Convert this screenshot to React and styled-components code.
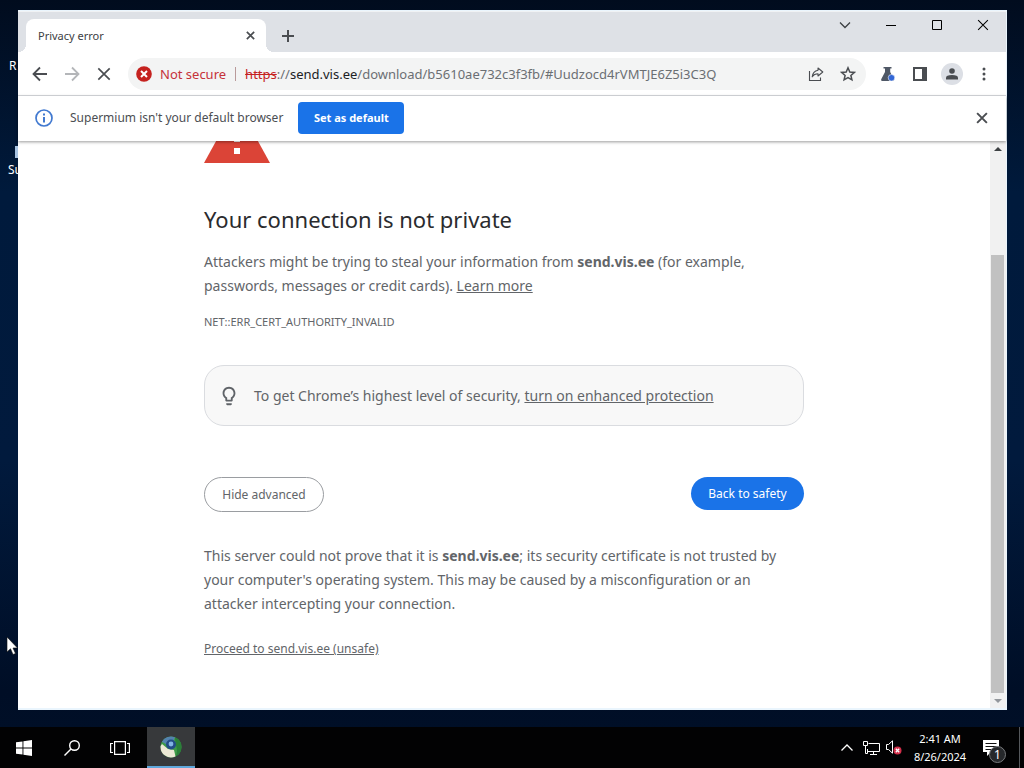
import styled, { createGlobalStyle } from "styled-components";

const GlobalStyle = createGlobalStyle`
    * {
        box-sizing: border-box;
    }
    body {
        margin: 0;
        font-family: "Noto Sans", "Open Sans", sans-serif;
        font-size: 14px;
        color: #626569;
    }
    button {
        font-family: inherit;
        padding: 0;
        border: none;
        background: none;
        cursor: pointer;
    }
    svg {
        display: block;
        flex-shrink: 0;
    }
`;

const Desktop = styled.div`
    position: relative;
    min-height: 100vh;
    display: flex;
    flex-direction: column;
    overflow: hidden;
    background: linear-gradient(180deg, #010c1e 0%, #001a3c 25%, #011a3d 60%, #000e26 90%, #001028 100%);
`;

const Shortcut = styled.span`
    position: absolute;
    left: ${(props) => props.$left}px;
    top: ${(props) => props.$top}px;
    font-size: 12px;
    line-height: 16px;
    color: white;
`;

const ShortcutIcon = styled.span`
    position: absolute;
    left: 15px;
    top: 146px;
    width: 32px;
    height: 12px;
    background-color: #a9c4e2;
`;

const Workspace = styled.div`
    position: relative;
    flex: 1;
    display: flex;
    padding: 10px 17px 17px 18px;
`;

const Window = styled.div`
    flex: 1;
    min-width: 0;
    display: flex;
    flex-direction: column;
    background-color: white;
    border: solid #eaf5fd;
    border-width: 1px 1px 2px 0;
`;

const TabStrip = styled.div`
    display: flex;
    align-items: flex-start;
    height: 41px;
    padding-left: 8px;
    background-color: #dee1e6;
    border-top: 1px solid #f0f2f4;
`;

const Tab = styled.div`
    position: relative;
    display: flex;
    align-items: center;
    justify-content: space-between;
    width: 240px;
    height: 33px;
    margin-top: 7px;
    padding: 0 8px 0 12px;
    border-radius: 8px 8px 0 0;
    background-color: white;
    font-size: 11px;
    color: #3c4043;

    &::before,
    &::after {
        content: "";
        position: absolute;
        bottom: 0;
        width: 8px;
        height: 8px;
    }
    &::before {
        right: 100%;
        background: radial-gradient(circle at 0 0, transparent 8px, white 8px);
    }
    &::after {
        left: 100%;
        background: radial-gradient(circle at 100% 0, transparent 8px, white 8px);
    }
`;

const IconButton = styled.button`
    display: flex;
    align-items: center;
    justify-content: center;
    flex-shrink: 0;
    width: ${(props) => props.$width || 32}px;
    height: ${(props) => props.$height || 32}px;
    color: ${(props) => props.$color || "#4a4d51"};
`;

const NewTab = styled(IconButton)`
    margin: 8px auto 0 6px;
`;

const Toolbar = styled.div`
    display: flex;
    align-items: center;
    height: 44px;
    padding: 0 6px;
    border-bottom: 1px solid #dadce0;
`;

const AddressBar = styled.div`
    flex: 1;
    min-width: 0;
    display: flex;
    align-items: center;
    height: 32px;
    margin: 0 6px 0 8px;
    padding: 0 2px 0 8px;
    border-radius: 16px;
    background-color: #f3f4f4;
    font-size: 13px;
    color: #6b6f73;
`;

const Security = styled.button`
    display: flex;
    align-items: center;
    gap: 8px;
    padding-right: 9px;
    font-size: 13px;
    color: #c5323a;
    white-space: nowrap;
`;

const Divider = styled.span`
    width: 1px;
    height: 14px;
    margin-right: 9px;
    background-color: #b99a9a;
`;

const Scheme = styled.s`
    color: #c5221f;
`;

const Host = styled.span`
    color: #202124;
`;

const UrlInput = styled.input`
    flex: 1;
    min-width: 0;
    padding: 0;
    border: none;
    outline: none;
    background: none;
    font: inherit;
    color: inherit;
`;

const Avatar = styled.span`
    display: flex;
    align-items: center;
    justify-content: center;
    width: 22px;
    height: 22px;
    border-radius: 50%;
    background-color: #dcdfe5;
`;

const InfoBar = styled.div`
    position: relative;
    display: flex;
    align-items: center;
    height: 45px;
    padding: 0 8px 2px 17px;
    background-color: white;
    box-shadow: 0 1px 3px rgba(0, 0, 0, 0.4);
    font-size: 12px;
    color: #4b4e52;
`;

const InfoText = styled.span`
    margin: 0 15px 0 17px;
`;

const DefaultButton = styled.button`
    width: 106px;
    height: 32px;
    margin-right: auto;
    border-radius: 4px;
    background-color: #1a73e8;
    font-size: 11px;
    font-weight: 700;
    color: white;
`;

const Viewport = styled.div`
    flex: 1;
    display: flex;
`;

const Page = styled.main`
    flex: 1;
    min-width: 0;
    padding: 0 24px 32px;
`;

const Content = styled.div`
    max-width: 600px;
    margin: 0 auto;
`;

const WarningClip = styled.div`
    display: flex;
    align-items: flex-end;
    height: 22px;
    overflow: hidden;
`;

const Title = styled.h1`
    margin: 40px 0 15px;
    font-size: 22px;
    line-height: 32px;
    font-weight: 400;
    color: #2a2b2e;
`;

const Paragraph = styled.p`
    max-width: 590px;
    margin: 0;
    font-size: 14px;
    line-height: 24px;
`;

const Link = styled.a`
    color: inherit;
    text-decoration: underline;
`;

const ErrorCode = styled.div`
    margin-top: 14px;
    font-size: 11px;
    line-height: 20px;
`;

const Promo = styled.div`
    display: flex;
    align-items: center;
    gap: 14px;
    min-height: 61px;
    margin: 33px 0 51px;
    padding: 0 13px;
    border: 1px solid #dadce0;
    border-radius: 20px;
    background-color: #f8f8f8;
`;

const Actions = styled.div`
    display: flex;
    align-items: flex-start;
    justify-content: space-between;
    margin-bottom: 32px;
`;

const HideButton = styled.button`
    width: 120px;
    height: 35px;
    border: 1px solid #9a9da1;
    border-radius: 18px;
    font-size: 12px;
    color: #626569;
`;

const SafetyButton = styled.button`
    width: 113px;
    height: 33px;
    border-radius: 17px;
    background-color: #1a73e8;
    font-size: 12px;
    color: white;
`;

const Proceed = styled.p`
    margin: 23px 0 0;
    font-size: 12px;
    line-height: 20px;
`;

const ScrollBar = styled.div`
    display: flex;
    flex-direction: column;
    align-items: center;
    width: 16px;
    padding: 6px 1px 5px 0;
    background-color: #f1f1f1;
`;

const Thumb = styled.div`
    width: 13px;
    flex: 437;
    margin-bottom: 6px;
    background-color: #c1c1c1;
`;

const TrackSpace = styled.div`
    flex: 104;
`;

const TaskBar = styled.footer`
    position: relative;
    display: flex;
    align-items: center;
    height: 41px;
    background-color: #020203;
    color: white;
`;

const TaskButton = styled(IconButton)`
    width: 48px;
    height: 41px;
    color: white;
`;

const ActiveTask = styled(TaskButton)`
    margin: 0 auto 0 3px;
    background-color: #37393b;
    border-bottom: 2px solid #5fa8dc;
`;

const Clock = styled.time`
    width: 70px;
    font-size: 11px;
    line-height: 18px;
    text-align: center;
`;

const Notifications = styled.button`
    position: relative;
    display: flex;
    align-items: center;
    width: 44px;
    height: 41px;
    padding-left: 8px;
    color: white;
`;

const Badge = styled.span`
    position: absolute;
    left: 14px;
    top: 19px;
    width: 17px;
    height: 17px;
    border: 1px solid #77797c;
    border-radius: 50%;
    background-color: #26282b;
    font-size: 12px;
    line-height: 15px;
    text-align: center;
`;

const ShowDesktop = styled.button`
    width: 5px;
    height: 41px;
    border-left: 1px solid #55585c;
`;

const Pointer = styled.svg`
    position: absolute;
    left: 6px;
    top: 636px;
`;

const Cross = ({ size, width = 1 }) => (
  <svg width={size} height={size} viewBox="0 0 16 16" fill="none" stroke="currentColor" strokeWidth={width}>
    <path d="M1.5 1.5 14.5 14.5M14.5 1.5 1.5 14.5" />
  </svg>
);

const ScrollArrow = ({ down }) => (
  <svg width="8" height="4" viewBox="0 0 8 4">
    <path d={down ? "M0 0H8L4 4Z" : "M0 4H8L4 0Z"} fill={down ? "#93979c" : "#3c4043"} />
  </svg>
);

const Tabs = () => (
  <TabStrip>
    <Tab>
      <span>Privacy error</span>
      <IconButton $width={16} $height={16} aria-label="Close tab">
        <Cross size={9} width={3} />
      </IconButton>
    </Tab>
    <NewTab aria-label="New tab">
      <svg width="12" height="12" viewBox="0 0 12 12" stroke="currentColor" strokeWidth="2">
        <path d="M6 0V12M0 6H12" />
      </svg>
    </NewTab>
    <IconButton $width={46} $height={26} $color="#3c4043" aria-label="Search tabs">
      <svg width="12" height="8" viewBox="0 0 12 8" fill="none" stroke="currentColor" strokeWidth="1.3">
        <path d="M1 1.5 6 6.5 11 1.5" />
      </svg>
    </IconButton>
    <IconButton $width={46} $height={26} $color="#000" aria-label="Minimize">
      <svg width="10" height="10" viewBox="0 0 10 10" stroke="currentColor">
        <path d="M0 5.5H10" />
      </svg>
    </IconButton>
    <IconButton $width={46} $height={26} $color="#000" aria-label="Maximize">
      <svg width="10" height="10" viewBox="0 0 10 10" fill="none" stroke="currentColor">
        <path d="M.5 .5H9.5V9.5H.5Z" />
      </svg>
    </IconButton>
    <IconButton $width={46} $height={26} $color="#000" aria-label="Close">
      <Cross size={12} width={1.4} />
    </IconButton>
  </TabStrip>
);

const AddressRow = () => (
  <Toolbar>
    <IconButton aria-label="Back">
      <svg width="16" height="16" viewBox="0 0 16 16" fill="none" stroke="currentColor" strokeWidth="1.8">
        <path d="M15 8H2M8 1.5 1.5 8 8 14.5" />
      </svg>
    </IconButton>
    <IconButton $color="#b4b6b9" aria-label="Forward">
      <svg width="16" height="16" viewBox="0 0 16 16" fill="none" stroke="currentColor" strokeWidth="1.8">
        <path d="M1 8H14M8 1.5 14.5 8 8 14.5" />
      </svg>
    </IconButton>
    <IconButton aria-label="Stop">
      <Cross size={14} width={1.9} />
    </IconButton>
    <AddressBar>
      <Security>
        <svg width="16" height="16" viewBox="0 0 16 16">
          <circle cx="8" cy="8" r="7.8" fill="#c5221f" />
          <path d="M5 5 11 11M11 5 5 11" stroke="#fff" strokeWidth="2" />
        </svg>
        Not secure
      </Security>
      <Divider />
      <Scheme>https</Scheme>
      <span>://</span>
      <Host>send.vis.ee</Host>
      <UrlInput aria-label="Address" defaultValue="/download/b5610ae732c3f3fb/#Uudzocd4rVMTJE6Z5i3C3Q" spellCheck={false} />
      <IconButton aria-label="Share">
        <svg width="16" height="16" viewBox="0 0 16 16" fill="none" stroke="currentColor" strokeWidth="1.1">
          <path d="M1.5 5V14.5H12.5V11.5" />
          <path d="M10 2 14.8 6 10 10V7.8C7.5 7.8 5.6 8.6 4.2 10.8 4.6 7.5 6.5 4.9 10 4.3Z" strokeLinejoin="round" />
        </svg>
      </IconButton>
      <IconButton aria-label="Bookmark this tab">
        <svg width="16" height="16" viewBox="0 0 16 16" fill="none" stroke="currentColor" strokeWidth="1.5">
          <path d="M8 1.8 9.8 6 14.3 6.4 10.9 9.4 11.9 13.8 8 11.5 4.1 13.8 5.1 9.4 1.7 6.4 6.2 6Z" />
        </svg>
      </IconButton>
    </AddressBar>
    <IconButton aria-label="Experiments">
      <svg width="16" height="16" viewBox="0 0 16 16">
        <path d="M3.5 1H11.5V2.5H10.2V6L14 13.2Q14.5 15 12.8 15H2.2Q.5 15 1.2 13.2L5 6V2.5H3.5Z" fill="#4f5866" />
        <circle cx="11.5" cy="11.8" r="3.3" fill="#3367d6" stroke="#fff" strokeWidth=".6" />
      </svg>
    </IconButton>
    <IconButton aria-label="Side panel">
      <svg width="14" height="14" viewBox="0 0 14 14">
        <path d="M1 1H13V13H1Z" fill="none" stroke="currentColor" strokeWidth="2" />
        <path d="M9 1H13V13H9Z" fill="currentColor" />
      </svg>
    </IconButton>
    <IconButton aria-label="Profile">
      <Avatar>
        <svg width="12" height="12" viewBox="0 0 12 12" fill="currentColor">
          <circle cx="6" cy="3" r="2.8" />
          <path d="M0 11.5V9.8Q0 7 6 7T12 9.8V11.5Z" />
        </svg>
      </Avatar>
    </IconButton>
    <IconButton aria-label="Menu">
      <svg width="4" height="14" viewBox="0 0 4 14" fill="currentColor">
        <circle cx="2" cy="2" r="1.5" />
        <circle cx="2" cy="7" r="1.5" />
        <circle cx="2" cy="12" r="1.5" />
      </svg>
    </IconButton>
  </Toolbar>
);

const DefaultBrowserBar = () => (
  <InfoBar>
    <svg width="18" height="18" viewBox="0 0 18 18" fill="none">
      <circle cx="9" cy="9" r="8" stroke="#4179d0" strokeWidth="1.7" />
      <path d="M9 8V13.5M9 4.5V6.5" stroke="#4179d0" strokeWidth="2" />
    </svg>
    <InfoText>Supermium isn't your default browser</InfoText>
    <DefaultButton>Set as default</DefaultButton>
    <IconButton aria-label="Dismiss">
      <Cross size={12} width={2.6} />
    </IconButton>
  </InfoBar>
);

const PrivacyError = () => (
  <Page>
    <Content>
      <WarningClip>
        <svg width="66" height="60" viewBox="0 0 66 60">
          <path d="M33 0 66 60H0Z" fill="#db4437" />
          <path d="M30 22H36V39H30ZM30 45H36V51H30Z" fill="#fff" />
        </svg>
      </WarningClip>
      <Title>Your connection is not private</Title>
      <Paragraph>
        Attackers might be trying to steal your information from <strong>send.vis.ee</strong> (for example,
        passwords, messages or credit cards). <Link href="#learn-more">Learn more</Link>
      </Paragraph>
      <ErrorCode>NET::ERR_CERT_AUTHORITY_INVALID</ErrorCode>
      <Promo>
        <svg width="22" height="22" viewBox="0 0 24 24" fill="#5f6368">
          <path d="M9 21c0 .5.4 1 1 1h4c.6 0 1-.5 1-1v-1H9v1zm3-19C8.1 2 5 5.1 5 9c0 2.4 1.2 4.5 3 5.7V17c0 .5.4 1 1 1h6c.6 0 1-.5 1-1v-2.3c1.8-1.3 3-3.4 3-5.7 0-3.9-3.1-7-7-7zm2.9 11.1-.9.6V16h-4v-2.3l-.9-.6C7.8 12.2 7 10.6 7 9c0-2.8 2.2-5 5-5s5 2.2 5 5c0 1.6-.8 3.2-2.1 4.1z" />
        </svg>
        <span>
          To get Chrome’s highest level of security, <Link href="#enhanced">turn on enhanced protection</Link>
        </span>
      </Promo>
      <Actions>
        <HideButton>Hide advanced</HideButton>
        <SafetyButton>Back to safety</SafetyButton>
      </Actions>
      <Paragraph>
        This server could not prove that it is <strong>send.vis.ee</strong>; its security certificate is not trusted by
        your computer's operating system. This may be caused by a misconfiguration or an attacker intercepting your
        connection.
      </Paragraph>
      <Proceed>
        <Link href="#proceed">Proceed to send.vis.ee (unsafe)</Link>
      </Proceed>
    </Content>
  </Page>
);

const Tray = () => (
  <>
    <IconButton $width={24} $color="#fff" aria-label="Show hidden icons">
      <svg width="12" height="7" viewBox="0 0 12 7" fill="none" stroke="currentColor" strokeWidth="1.3">
        <path d="M.5 6.5 6 1 11.5 6.5" />
      </svg>
    </IconButton>
    <IconButton $width={24} $color="#fff" aria-label="Network">
      <svg width="17" height="14" viewBox="0 0 17 14" fill="none" stroke="currentColor">
        <path d="M5.5 2.5H16.5V10.5H4.5M10.5 10.5V13M7 13.5H14M.5 .5H4.5V4.5H.5ZM2.5 4.5V12.5H4.5V8" />
      </svg>
    </IconButton>
    <IconButton $width={22} $color="#fff" aria-label="Volume muted">
      <svg width="16" height="15" viewBox="0 0 16 15" fill="none" stroke="currentColor">
        <path d="M.5 4.5H2.5L6.5 .8V13.2L2.5 9.5H.5Z" />
        <circle cx="11.5" cy="10.5" r="4" fill="#d32f4a" stroke="none" />
        <path d="M9.8 8.8 13.2 12.2M13.2 8.8 9.8 12.2" strokeWidth="1.3" />
      </svg>
    </IconButton>
    <Clock dateTime="2024-08-26T02:41">
      2:41 AM
      <br />
      8/26/2024
    </Clock>
    <Notifications aria-label="Notifications">
      <svg width="16" height="16" viewBox="0 0 16 16">
        <path d="M0 0H16V12H8L4 16V12H0Z" fill="#fff" />
        <path d="M2.5 3.5H13.5M2.5 6.5H13.5M2.5 9.5H9" stroke="#111" />
      </svg>
      <Badge>1</Badge>
    </Notifications>
    <ShowDesktop aria-label="Show desktop" />
  </>
);

const App = () => {
  return (
    <Desktop>
      <GlobalStyle />
      <Shortcut $left={9} $top={58}>R</Shortcut>
      <ShortcutIcon />
      <Shortcut $left={8} $top={162}>Su</Shortcut>
      <Workspace>
        <Window>
          <Tabs />
          <AddressRow />
          <DefaultBrowserBar />
          <Viewport>
            <PrivacyError />
            <ScrollBar>
              <ScrollArrow />
              <TrackSpace />
              <Thumb />
              <ScrollArrow down />
            </ScrollBar>
          </Viewport>
        </Window>
      </Workspace>
      <TaskBar>
        <TaskButton aria-label="Start">
          <svg width="16" height="16" viewBox="0 0 16 16" fill="currentColor">
            <path d="M0 2.3 6.5 1.4V7.5H0ZM7.4 1.2 16 0V7.5H7.4ZM0 8.5H6.5V14.6L0 13.7ZM7.4 8.5H16V16L7.4 14.8Z" />
          </svg>
        </TaskButton>
        <TaskButton aria-label="Search">
          <svg width="16" height="16" viewBox="0 0 16 16" fill="none" stroke="currentColor" strokeWidth="1.4">
            <circle cx="10.5" cy="5.5" r="4.8" />
            <path d="M7 9 .5 15.5" />
          </svg>
        </TaskButton>
        <TaskButton aria-label="Task view">
          <svg width="20" height="14" viewBox="0 0 20 14" fill="none" stroke="currentColor" strokeWidth="1.2">
            <path d="M4.6 .6H15.4V13.4H4.6ZM3 2.5H.6V11.5H3M17 2.5H19.4V11.5H17" />
          </svg>
        </TaskButton>
        <ActiveTask aria-label="Supermium">
          <svg width="22" height="22" viewBox="0 0 22 22">
            <circle cx="11" cy="11" r="10.5" fill="#3f9a48" />
            <path d="M1.9 5.7A10.5 10.5 0 0 1 15 1.3L11 11Z" fill="#5382ad" />
            <path d="M.6 10A10.5 10.5 0 0 0 15.5 20.5L14 14 8 13 2 8Z" fill="#ece8d4" />
            <path d="M15 1.3A10.5 10.5 0 0 1 15.5 20.5Q18.5 15 15.5 8Z" fill="#2a8038" />
            <circle cx="11" cy="8.5" r="5" fill="#234c86" />
            <circle cx="11" cy="8" r="2.4" fill="#82b4e4" />
          </svg>
        </ActiveTask>
        <Tray />
      </TaskBar>
      <Pointer width="12" height="20" viewBox="0 0 12 20">
        <path d="M1 1V16L4.5 12.8 7 18.5 9.5 17.5 7 12H11.5Z" fill="#fff" stroke="#111" strokeWidth=".6" />
      </Pointer>
    </Desktop>
  );
};

export default App;
